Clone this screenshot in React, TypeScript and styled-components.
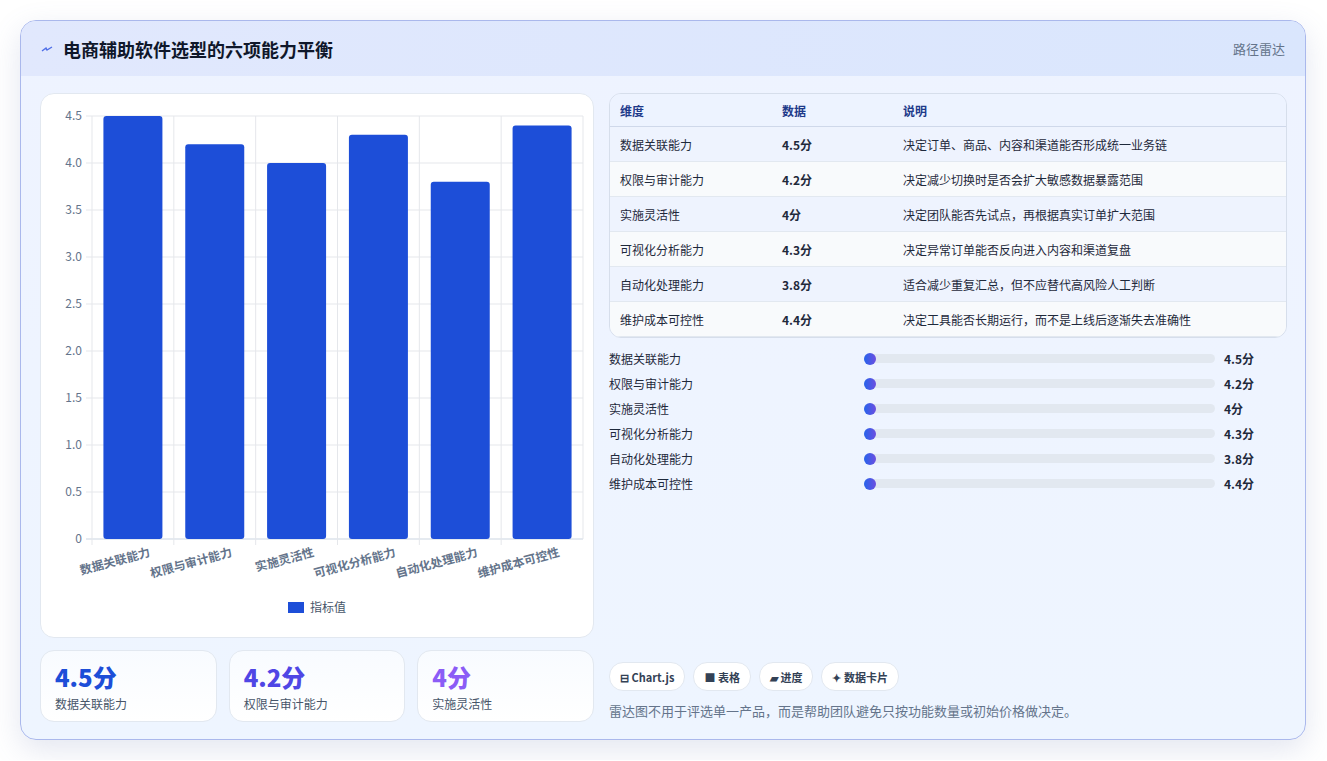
import React from 'react'
import styled, { createGlobalStyle } from 'styled-components'

const GlobalStyle = createGlobalStyle`
  html, body { margin: 0; padding: 0; background: #ffffff; }
  body { font-family: "Noto Sans CJK SC", "Noto Sans", sans-serif; color: #1e293b; }
`

const data = [
  { name: '数据关联能力', value: 4.5, note: '决定订单、商品、内容和渠道能否形成统一业务链' },
  { name: '权限与审计能力', value: 4.2, note: '决定减少切换时是否会扩大敏感数据暴露范围' },
  { name: '实施灵活性', value: 4, note: '决定团队能否先试点，再根据真实订单扩大范围' },
  { name: '可视化分析能力', value: 4.3, note: '决定异常订单能否反向进入内容和渠道复盘' },
  { name: '自动化处理能力', value: 3.8, note: '适合减少重复汇总，但不应替代高风险人工判断' },
  { name: '维护成本可控性', value: 4.4, note: '决定工具能否长期运行，而不是上线后逐渐失去准确性' },
]

const Page = styled.div`
  padding: 20px 20px 20px 20px;
`

const Card = styled.div`
  width: 1286px;
  height: 720px;
  box-sizing: border-box;
  border: 1px solid #aab8ec;
  border-radius: 16px;
  background: linear-gradient(180deg, #eef3ff 0%, #eef5ff 100%);
  box-shadow: 0 10px 30px rgba(100, 116, 170, 0.18);
  overflow: hidden;
  display: flex;
  flex-direction: column;
`

const Header = styled.div`
  height: 55px;
  flex-shrink: 0;
  display: flex;
  align-items: center;
  justify-content: space-between;
  padding: 0 20px;
  background: linear-gradient(90deg, #e1e8fd 0%, #dae6fd 100%);
`

const Title = styled.h1`
  margin: 0;
  font-size: 18px;
  font-weight: 700;
  color: #0f172a;
  display: flex;
  align-items: center;
  gap: 10px;
`

const HeaderTag = styled.span`
  font-size: 13px;
  color: #64748b;
`

const Body = styled.div`
  flex: 1;
  display: grid;
  grid-template-columns: 554px 678px;
  gap: 15px;
  padding: 17px 19px 19px 19px;
`

const LeftCol = styled.div`
  display: flex;
  flex-direction: column;
  gap: 12px;
`

const ChartCard = styled.div`
  height: 543px;
  background: #ffffff;
  border: 1px solid #e2e8f0;
  border-radius: 14px;
  overflow: hidden;
`

const Stats = styled.div`
  display: grid;
  grid-template-columns: repeat(3, 1fr);
  gap: 12px;
`

const Stat = styled.div`
  height: 72px;
  box-sizing: border-box;
  padding: 10px 14px;
  border: 1px solid #e2e8f0;
  border-radius: 14px;
  background: linear-gradient(180deg, #f8fbff, #ffffff);
`

const StatValue = styled.div<{ $color: string }>`
  font-size: 24px;
  font-weight: 800;
  line-height: 32px;
  color: ${(p) => p.$color};
`

const StatLabel = styled.div`
  font-size: 12px;
  color: #475569;
  margin-top: 2px;
`

const RightCol = styled.div`
  display: flex;
  flex-direction: column;
`

const Table = styled.table`
  width: 100%;
  border-collapse: separate;
  border-spacing: 0;
  border: 1px solid #d6deeb;
  border-radius: 12px;
  overflow: hidden;
  font-size: 12px;
`

const Th = styled.th`
  text-align: left;
  font-weight: 600;
  color: #1e3a8a;
  height: 32px;
  padding: 0 10px;
  background: #edf3ff;
  border-bottom: 1px solid #cfd8ea;
`

const Tr = styled.tr<{ $odd: boolean }>`
  background: ${(p) => (p.$odd ? '#f8fafc' : '#eef3fe')};
`

const Td = styled.td<{ $bold?: boolean }>`
  height: 34px;
  padding: 0 10px;
  color: #1e293b;
  font-weight: ${(p) => (p.$bold ? 600 : 400)};
  border-bottom: 1px solid #e2e8f0;
`

const Bars = styled.div`
  margin-top: 8px;
  display: flex;
  flex-direction: column;
`

const BarRow = styled.div`
  height: 25px;
  display: grid;
  grid-template-columns: 255px 351px 1fr;
  align-items: center;
  gap: 0;
  font-size: 12px;
`

const BarValue = styled.span`
  font-weight: 700;
  padding-left: 9px;
  color: #1e293b;
`

const Track = styled.div`
  height: 9px;
  border-radius: 5px;
  background: #e2e8f0;
  position: relative;
`

const Dot = styled.div`
  position: absolute;
  left: 0;
  top: -1.5px;
  width: 12px;
  height: 12px;
  border-radius: 50%;
  background: linear-gradient(90deg, #2563eb, #6d4fe0);
`

const Footer = styled.div`
  margin-top: auto;
  display: flex;
  flex-direction: column;
  gap: 10px;
`

const Chips = styled.div`
  display: flex;
  gap: 8px;
`

const Chip = styled.span`
  height: 27px;
  padding: 0 10px;
  display: inline-flex;
  align-items: center;
  gap: 4px;
  font-size: 11px;
  font-weight: 700;
  color: #334155;
  background: #ffffff;
  border: 1px solid #e2e8f0;
  border-radius: 14px;
`

const Caption = styled.div`
  font-size: 13px;
  color: #64748b;
  padding-bottom: 2px;
`

function BarChart() {
  const x0 = 51
  const w = 491
  const top = 22
  const bottom = 445
  const scale = (bottom - top) / 4.5
  const step = w / 6
  const ticks = [0, 0.5, 1, 1.5, 2, 2.5, 3, 3.5, 4, 4.5]
  const font = '"Noto Sans CJK SC", sans-serif'
  return (
    <svg width={554} height={543}>
      {ticks.map((t) => {
        const y = bottom - t * scale
        return (
          <g key={t}>
            <line x1={x0 - 6} x2={x0 + w} y1={y} y2={y} stroke={t === 0 ? '#cbd5e1' : '#e5e7eb'} />
            <text x={x0 - 10} y={y + 4} fontSize={12} fill="#64748b" textAnchor="end" fontFamily={font}>
              {t === 0 ? '0' : t.toFixed(1)}
            </text>
          </g>
        )
      })}
      {data.map((d, i) => (
        <line key={'v' + i} x1={x0 + i * step} x2={x0 + i * step} y1={top} y2={bottom + 6} stroke="#e5e7eb" />
      ))}
      <line x1={x0 + w} x2={x0 + w} y1={top} y2={bottom} stroke="#e5e7eb" />
      {data.map((d, i) => {
        const bw = 59
        const x = x0 + i * step + (step - bw) / 2
        const y = bottom - d.value * scale
        return <rect key={d.name} x={x} y={y} width={bw} height={bottom - y} rx={3} fill="#1d4ed8" />
      })}
      {data.map((d, i) => {
        const cx = x0 + i * step + step / 2 + 18
        return (
          <text
            key={'l' + d.name}
            x={cx}
            y={462}
            fontSize={12}
            fontWeight={600}
            fill="#64748b"
            textAnchor="end"
            fontFamily={font}
            transform={`rotate(-15 ${cx} 462)`}
          >
            {d.name}
          </text>
        )
      })}
      <rect x={247} y={508} width={16} height={11} fill="#1d4ed8" />
      <text x={269} y={518} fontSize={12} fill="#475569" fontFamily={font}>
        指标值
      </text>
    </svg>
  )
}

export default function App() {
  return (
    <Page>
      <GlobalStyle />
      <Card>
        <Header>
          <Title>
            <svg width="12" height="10" viewBox="0 0 12 10">
              <path d="M1 7 L5 4 L6 6 L11 3" stroke="#4f6ee8" strokeWidth="1.4" fill="none" />
            </svg>
            电商辅助软件选型的六项能力平衡
          </Title>
          <HeaderTag>路径雷达</HeaderTag>
        </Header>
        <Body>
          <LeftCol>
            <ChartCard>
              <BarChart />
            </ChartCard>
            <Stats>
              <Stat>
                <StatValue $color="#1d4ed8">4.5分</StatValue>
                <StatLabel>数据关联能力</StatLabel>
              </Stat>
              <Stat>
                <StatValue $color="#4f46e5">4.2分</StatValue>
                <StatLabel>权限与审计能力</StatLabel>
              </Stat>
              <Stat>
                <StatValue $color="#8b5cf6">4分</StatValue>
                <StatLabel>实施灵活性</StatLabel>
              </Stat>
            </Stats>
          </LeftCol>
          <RightCol>
            <Table>
              <thead>
                <tr>
                  <Th style={{ width: 142 }}>维度</Th>
                  <Th style={{ width: 101 }}>数据</Th>
                  <Th>说明</Th>
                </tr>
              </thead>
              <tbody>
                {data.map((d, i) => (
                  <Tr key={d.name} $odd={i % 2 === 1}>
                    <Td>{d.name}</Td>
                    <Td $bold>{d.value}分</Td>
                    <Td>{d.note}</Td>
                  </Tr>
                ))}
              </tbody>
            </Table>
            <Bars>
              {data.map((d) => (
                <BarRow key={d.name}>
                  <span>{d.name}</span>
                  <Track>
                    <Dot />
                  </Track>
                  <BarValue>{d.value}分</BarValue>
                </BarRow>
              ))}
            </Bars>
            <Footer>
              <Chips>
                <Chip>⊟ Chart.js</Chip>
                <Chip>■ 表格</Chip>
                <Chip>▰ 进度</Chip>
                <Chip>✦ 数据卡片</Chip>
              </Chips>
              <Caption>雷达图不用于评选单一产品，而是帮助团队避免只按功能数量或初始价格做决定。</Caption>
            </Footer>
          </RightCol>
        </Body>
      </Card>
    </Page>
  )
}
